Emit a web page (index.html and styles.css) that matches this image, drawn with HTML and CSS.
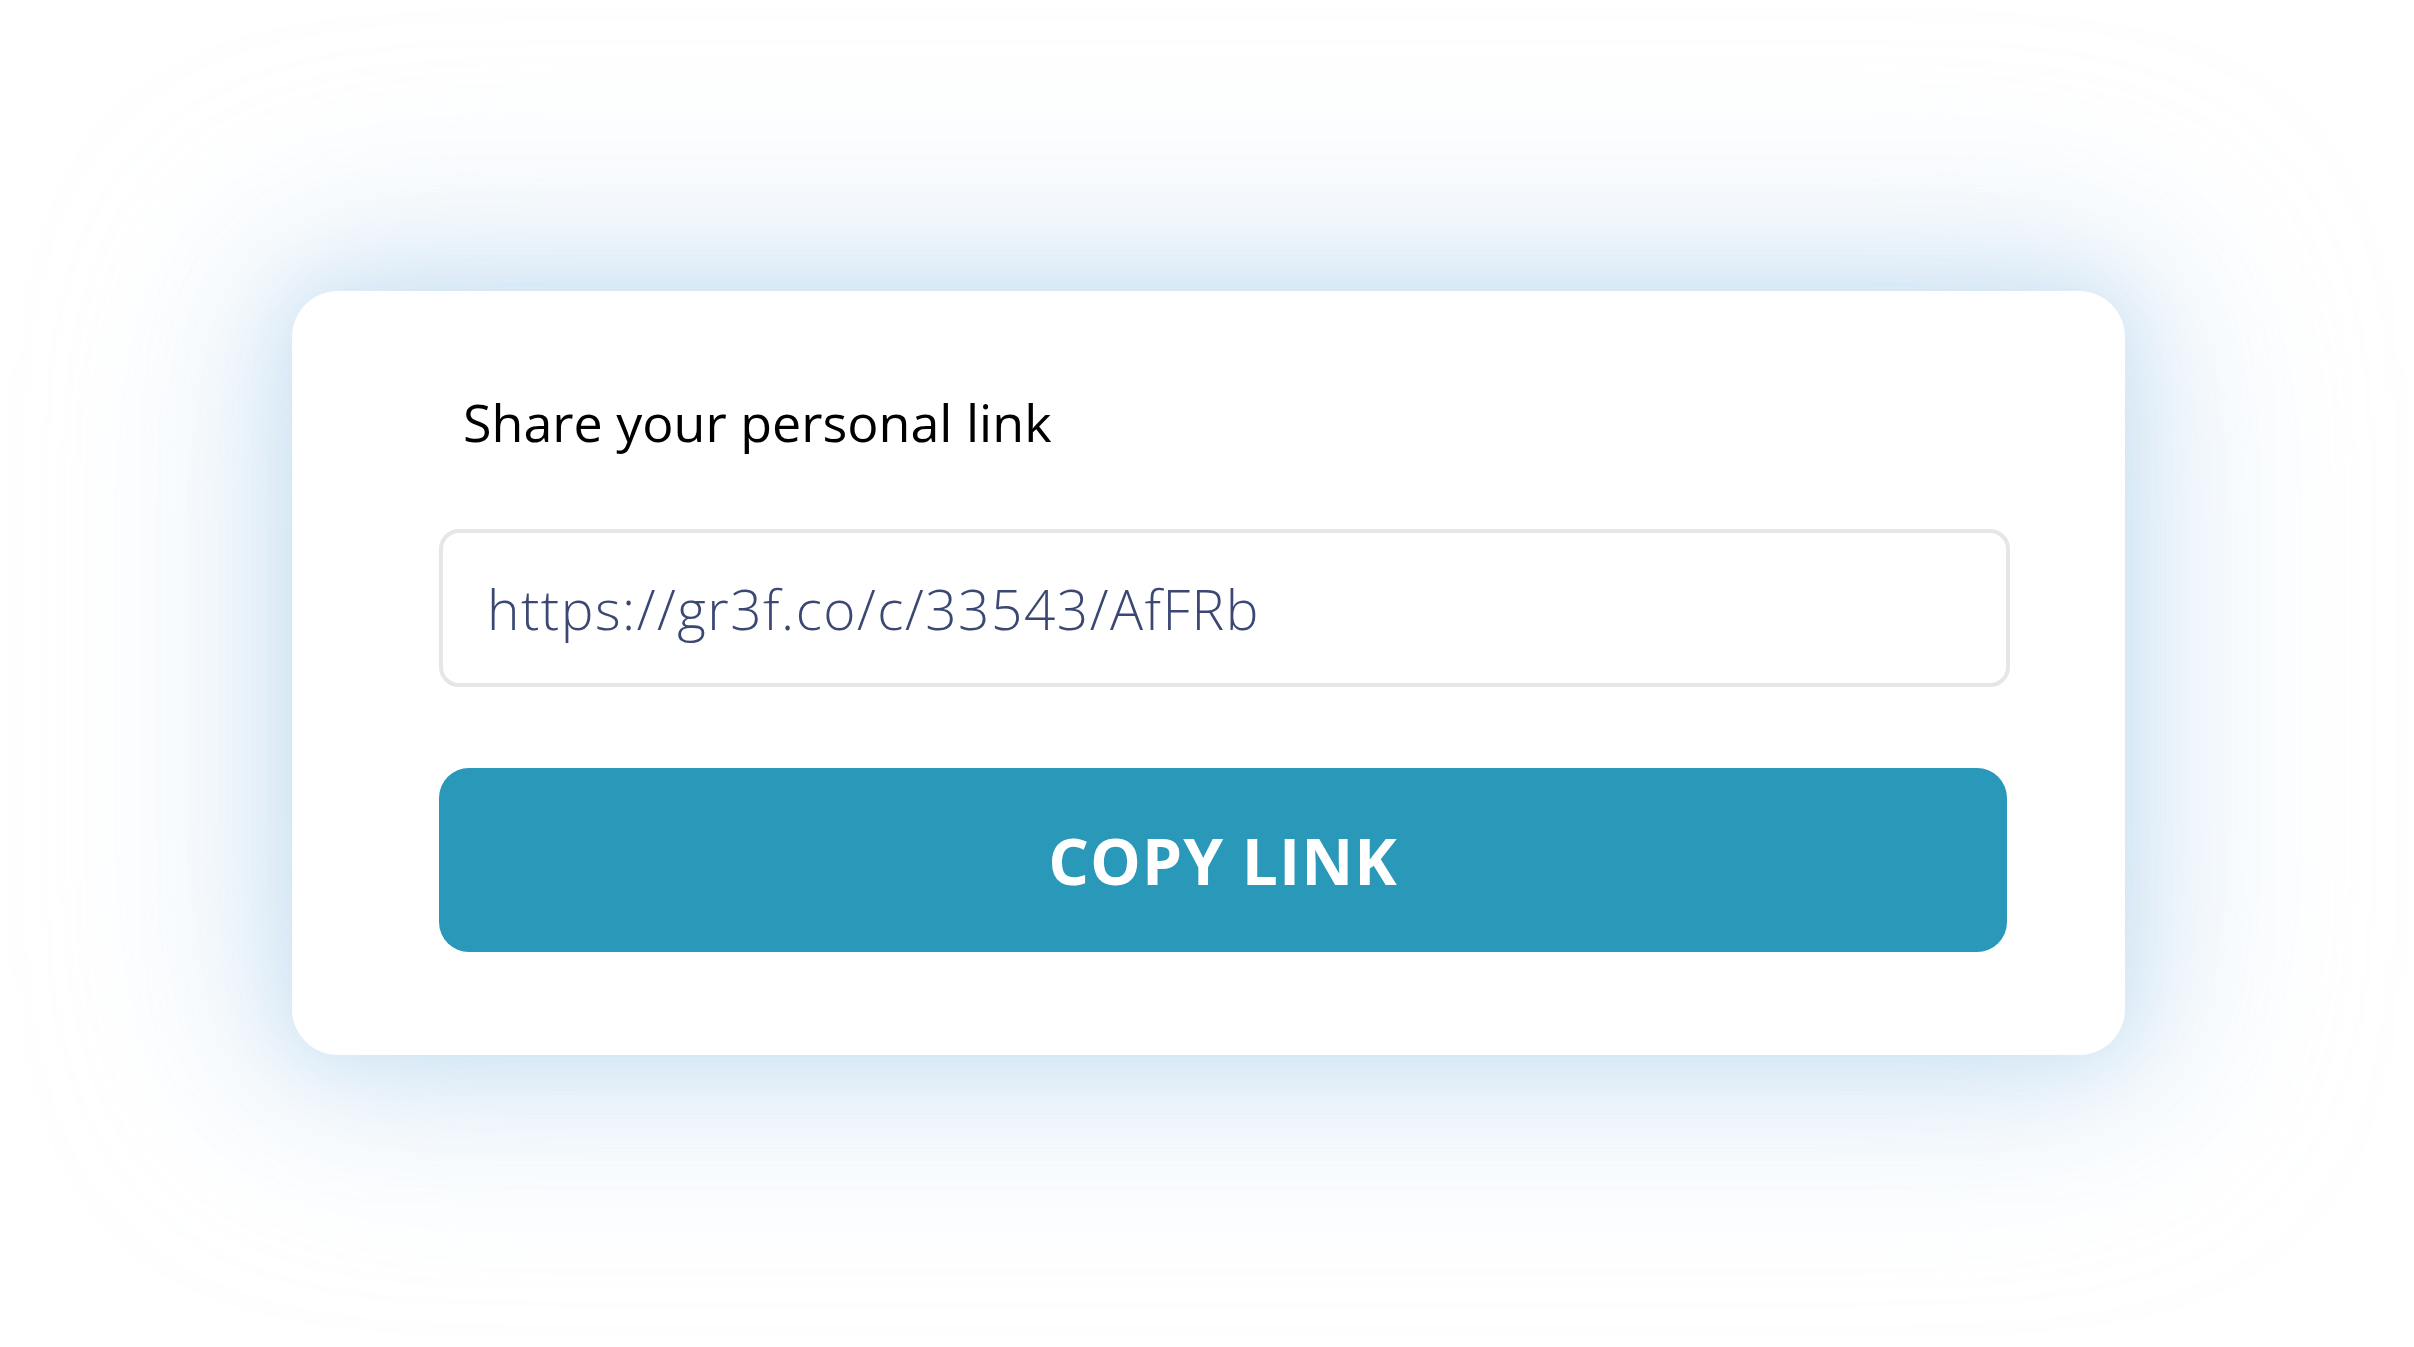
FILE: index.html
```html
<!DOCTYPE html>
<html lang="en">
<head>
<meta charset="utf-8">
<title>Share your personal link</title>
<link rel="stylesheet" href="styles.css">
</head>
<body>
<div class="page">
  <div class="card">
    <h2 class="title">Share your personal link</h2>
    <div class="link-field">https://gr3f.co/c/33543/AfFRb</div>
    <button class="copy-btn" type="button">COPY LINK</button>
  </div>
</div>
</body>
</html>
```

FILE: styles.css
```css
html, body {
  margin: 0;
  padding: 0;
  background: #ffffff;
}

.page {
  width: 2414px;
  height: 1347px;
  box-sizing: border-box;
  padding: 291px 0 0 292px;
  overflow: hidden;
}

.card {
  width: 1833px;
  height: 764px;
  box-sizing: border-box;
  background: #ffffff;
  border-radius: 46px;
  padding: 95px 115px 0 147px;
  display: flex;
  flex-direction: column;
  box-shadow:
    0 0 60px 0 rgba(183, 214, 240, 0.45),
    0 0 140px 10px rgba(183, 214, 240, 0.45),
    0 0 220px 40px rgba(183, 214, 240, 0.35);
}

.title {
  margin: 0 0 0 24px;
  font-family: "Open Sans", "Noto Sans", sans-serif;
  font-weight: 400;
  font-size: 52px;
  line-height: normal;
  color: #000000;
}

.link-field {
  margin-top: 72px;
  height: 158px;
  box-sizing: border-box;
  border: 4px solid #e4e6e8;
  border-radius: 20px;
  padding: 0 44px;
  display: flex;
  align-items: center;
  font-family: "Open Sans", sans-serif;
  font-weight: 300;
  font-size: 55px;
  letter-spacing: 1.5px;
  color: #3c4874;
}

.copy-btn {
  margin-top: 81px;
  height: 184px;
  width: 1568px;
  border: none;
  border-radius: 30px;
  background: #2a98b9;
  color: #ffffff;
  font-family: "Open Sans", sans-serif;
  font-weight: 700;
  font-size: 64px;
  letter-spacing: 1px;
  padding: 0;
  cursor: pointer;
}
```
